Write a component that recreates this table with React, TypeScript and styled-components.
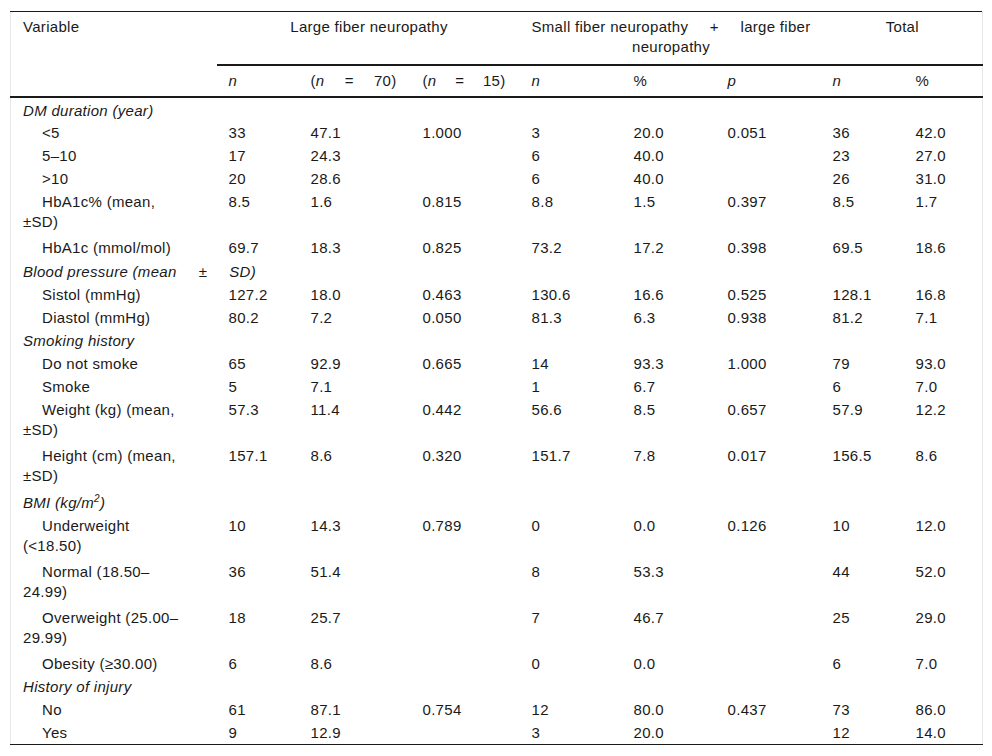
import React from "react";
import styled, { createGlobalStyle } from "styled-components";

const GlobalStyle = createGlobalStyle`
  body {
    margin: 0;
    background: #fff;
    font-family: "Liberation Sans", Arial, sans-serif;
    color: #1a1a1a;
  }
`;

type Row = {
  label: React.ReactNode;
  kind: "section" | "item" | "spread";
  cells?: string[];
  tall?: boolean;
};

const colWidths = [206, 82, 112, 109, 102, 94, 105, 83, 79];

const rows: Row[] = [
  { label: "DM duration (year)", kind: "section" },
  { label: "<5", kind: "item", cells: ["33", "47.1", "1.000", "3", "20.0", "0.051", "36", "42.0"] },
  { label: "5–10", kind: "item", cells: ["17", "24.3", "", "6", "40.0", "", "23", "27.0"] },
  { label: ">10", kind: "item", cells: ["20", "28.6", "", "6", "40.0", "", "26", "31.0"] },
  { label: "HbA1c% (mean,\n±SD)", kind: "item", tall: true, cells: ["8.5", "1.6", "0.815", "8.8", "1.5", "0.397", "8.5", "1.7"] },
  { label: "HbA1c (mmol/mol)", kind: "item", cells: ["69.7", "18.3", "0.825", "73.2", "17.2", "0.398", "69.5", "18.6"] },
  { label: null, kind: "spread" },
  { label: "Sistol (mmHg)", kind: "item", cells: ["127.2", "18.0", "0.463", "130.6", "16.6", "0.525", "128.1", "16.8"] },
  { label: "Diastol (mmHg)", kind: "item", cells: ["80.2", "7.2", "0.050", "81.3", "6.3", "0.938", "81.2", "7.1"] },
  { label: "Smoking history", kind: "section" },
  { label: "Do not smoke", kind: "item", cells: ["65", "92.9", "0.665", "14", "93.3", "1.000", "79", "93.0"] },
  { label: "Smoke", kind: "item", cells: ["5", "7.1", "", "1", "6.7", "", "6", "7.0"] },
  { label: "Weight (kg) (mean,\n±SD)", kind: "item", tall: true, cells: ["57.3", "11.4", "0.442", "56.6", "8.5", "0.657", "57.9", "12.2"] },
  { label: "Height (cm) (mean,\n±SD)", kind: "item", tall: true, cells: ["157.1", "8.6", "0.320", "151.7", "7.8", "0.017", "156.5", "8.6"] },
  { label: <>BMI (kg/m<sup>2</sup>)</>, kind: "section" },
  { label: "Underweight\n(<18.50)", kind: "item", tall: true, cells: ["10", "14.3", "0.789", "0", "0.0", "0.126", "10", "12.0"] },
  { label: "Normal (18.50–\n24.99)", kind: "item", tall: true, cells: ["36", "51.4", "", "8", "53.3", "", "44", "52.0"] },
  { label: "Overweight (25.00–\n29.99)", kind: "item", tall: true, cells: ["18", "25.7", "", "7", "46.7", "", "25", "29.0"] },
  { label: "Obesity (≥30.00)", kind: "item", cells: ["6", "8.6", "", "0", "0.0", "", "6", "7.0"] },
  { label: "History of injury", kind: "section" },
  { label: "No", kind: "item", cells: ["61", "87.1", "0.754", "12", "80.0", "0.437", "73", "86.0"] },
  { label: "Yes", kind: "item", cells: ["9", "12.9", "", "3", "20.0", "", "12", "14.0"] },
];

const Table = styled.table`
  width: 972px;
  margin: 11px 0 0 10px;
  table-layout: fixed;
  border-collapse: collapse;
  border-top: 1px solid #1a1a1a;
  border-bottom: 1px solid #1a1a1a;
  border-left: 1px solid #e8e8e8;
  border-right: 1px solid #e8e8e8;
  font-size: 15px;
  letter-spacing: 0.3px;
  line-height: 20px;
`;

const Col = styled.col<{ $w: number }>`
  width: ${(p) => p.$w}px;
`;

const GroupHead = styled.th<{ $rule?: boolean }>`
  font-weight: normal;
  vertical-align: top;
  padding: 5px 10px 7px 12px;
  text-align: justify;
  text-align-last: center;
  border-bottom: ${(p) => (p.$rule ? "2px solid #1a1a1a" : "none")};
`;

/* keeps a phrase's own spacing when the line around it is justified */
const Phrase = styled.span`
  display: inline-block;
`;

const VarHead = styled.th`
  font-weight: normal;
  vertical-align: top;
  text-align: left;
  padding: 5px 10px 0 12px;
  border-bottom: 2px solid #1a1a1a;
`;

const SubHead = styled.th<{ $spread?: boolean }>`
  font-weight: normal;
  text-align: left;
  text-align-last: ${(p) => (p.$spread ? "justify" : "auto")};
  padding: 5px 14px 5px 12px;
  border-bottom: 2px solid #1a1a1a;
  white-space: nowrap;
`;

const BodyRow = styled.tr<{ $tall?: boolean }>`
  height: ${(p) => (p.$tall ? 46.2 : 23.1)}px;
`;

const Cell = styled.td`
  vertical-align: top;
  padding: 2.5px 4px 0 12px;
  white-space: nowrap;
`;

const Label = styled.td<{ $kind: Row["kind"] }>`
  vertical-align: top;
  padding: 2.5px 10px 0 12px;
  white-space: pre-line;
  font-style: ${(p) => (p.$kind === "item" ? "normal" : "italic")};
  text-indent: ${(p) => (p.$kind === "item" ? "19px" : "0")};

  sup {
    font-size: 10px;
    line-height: 0;
  }
`;

const Spread = styled.span`
  display: inline-block;
  width: 233px;
  text-align: justify;
  text-align-last: justify;
  white-space: nowrap;
`;

export default function App() {
  return (
    <>
      <GlobalStyle />
      <Table>
        <colgroup>
          {colWidths.map((w, i) => (
            <Col key={i} $w={w} />
          ))}
        </colgroup>
        <thead>
          <tr>
            <VarHead rowSpan={2}>Variable</VarHead>
            <GroupHead colSpan={3} $rule>
              Large fiber neuropathy
            </GroupHead>
            <GroupHead colSpan={3} $rule>
              <Phrase>Small fiber neuropathy</Phrase> + <Phrase>large fiber</Phrase> neuropathy
            </GroupHead>
            <GroupHead colSpan={2} $rule>
              Total
            </GroupHead>
          </tr>
          <tr>
            <SubHead><i>n</i></SubHead>
            <SubHead $spread>(<i>n</i> = 70)</SubHead>
            <SubHead $spread>(<i>n</i> = 15)</SubHead>
            <SubHead><i>n</i></SubHead>
            <SubHead>%</SubHead>
            <SubHead><i>p</i></SubHead>
            <SubHead><i>n</i></SubHead>
            <SubHead>%</SubHead>
          </tr>
        </thead>
        <tbody>
          {rows.map((row, i) => (
            <BodyRow key={i} $tall={row.tall}>
              {row.kind === "spread" ? (
                <Label $kind="spread" colSpan={2}>
                  <Spread>
                    <Phrase>Blood pressure (mean</Phrase> ± SD)
                  </Spread>
                </Label>
              ) : (
                <Label $kind={row.kind}>{row.label}</Label>
              )}
              {(row.cells ?? Array(row.kind === "spread" ? 7 : 8).fill("")).map((c, j) => (
                <Cell key={j}>{c}</Cell>
              ))}
            </BodyRow>
          ))}
        </tbody>
      </Table>
    </>
  );
}
